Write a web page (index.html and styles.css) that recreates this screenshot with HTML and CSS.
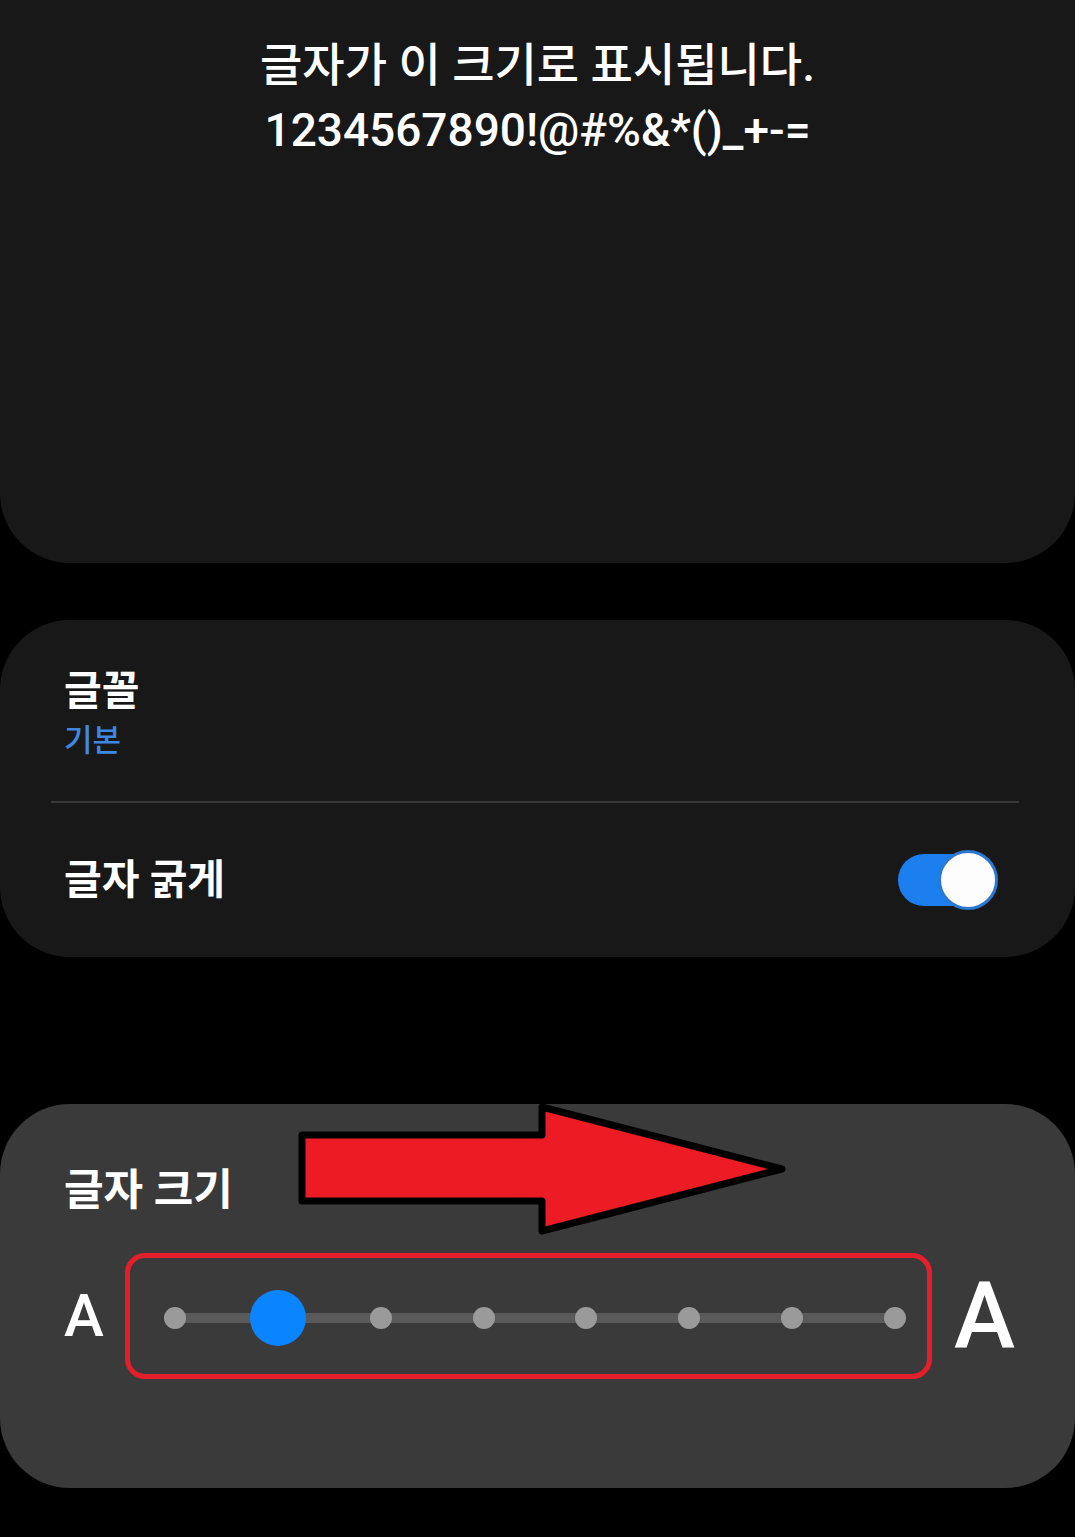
FILE: index.html
```html
<!DOCTYPE html>
<html lang="ko">
<head>
    <meta charset="UTF-8">
    <meta name="viewport" content="width=device-width, initial-scale=1.0">
    <title>글자 크기와 스타일</title>

    <link rel="stylesheet" href="styles.css">

</head>
<body>

    <div id="wrapper">

        <div class="card preview">
            <p class="preview_text">글자가 이 크기로 표시됩니다.<br>1234567890!@#%&amp;*()_+-=</p>
        </div>

        <div class="card options">

            <div class="option option_font">
                <div class="option_title">글꼴</div>
                <div class="option_value">기본</div>
            </div>

            <div class="divider"></div>

            <div class="option option_bold">
                <div class="option_title">글자 굵게</div>
                <div class="toggle">
                    <div class="toggle_knob"></div>
                </div>
            </div>

        </div>

        <div class="card size">

            <div class="size_title">글자 크기</div>

            <svg class="arrow" width="500" height="140" viewBox="0 0 500 140">
                <polygon points="4,32 244,32 244,4 484,66 244,128 244,98 4,98" fill="#ed1c24" stroke="#000" stroke-width="7" stroke-linejoin="round"/>
            </svg>

            <div class="size_row">
                <span class="size_a small">A</span>

                <div class="slider_box">
                    <div class="slider">
                        <span class="stop"></span>
                        <span class="stop active"></span>
                        <span class="stop"></span>
                        <span class="stop"></span>
                        <span class="stop"></span>
                        <span class="stop"></span>
                        <span class="stop"></span>
                        <span class="stop"></span>
                    </div>
                </div>

                <span class="size_a big">A</span>
            </div>

        </div>

    </div>

</body>
</html>
```

FILE: styles.css
```css
*{
    font-family: Roboto, "Noto Sans CJK KR", sans-serif;
    box-sizing: border-box;
}

body{
    margin: 0;
    padding: 0;

    width: 1075px;
    height: 1537px;

    background: #000;
    color: #fff;
    overflow: hidden;
}

#wrapper{
    display: flex;
    flex-direction: column;
}

.card{
    background: #181818;
    border-radius: 70px;
}

/* preview */

.preview{
    height: 563px;
    border-radius: 0 0 70px 70px;
    padding-top: 33px;
}

.preview_text{
    margin: 0;
    text-align: center;

    font-size: 46px;
    line-height: 65px;
    font-weight: 500;
}

/* options */

.options{
    margin-top: 57px;
    height: 337px;

    display: flex;
    flex-direction: column;
}

.option{
    padding: 0 77px 0 64px;
}

.option_font{
    height: 181px;
    padding-top: 44px;
}

.option_title{
    font-size: 41px;
    line-height: 54px;
    font-weight: 700;
}

.option_value{
    font-size: 31px;
    line-height: 46px;
    font-weight: 500;
    color: #3f87e0;
}

.divider{
    height: 2px;
    margin: 0 56px 0 51px;
    background: #383838;
}

.option_bold{
    flex: 1;

    display: flex;
    align-items: center;
    justify-content: space-between;
}

.toggle{
    width: 92px;
    height: 52px;
    margin-right: 8px;

    border-radius: 26px;
    background: #1b7ff0;

    display: flex;
    align-items: center;
    justify-content: flex-end;
}

.toggle_knob{
    width: 60px;
    height: 60px;
    margin-right: -8px;

    border-radius: 50%;
    background: #fdfdfd;
    border: 3px solid #2a78d0;
}

/* text size */

.size{
    position: relative;

    margin-top: 147px;
    height: 384px;

    background: #3a3a3a;
    padding-top: 55px;
}

.size_title{
    padding-left: 64px;

    font-size: 43px;
    line-height: 62px;
    font-weight: 700;
}

.arrow{
    position: absolute;
    left: 298px;
    top: -1px;
}

.size_row{
    margin-top: 32px;

    display: flex;
    align-items: center;
}

.size_a{
    font-family: Roboto, sans-serif;
    font-weight: 500;
    line-height: 1;
}

.size_a.small{
    width: 125px;
    padding-left: 64px;
    font-size: 60px;
}

.size_a.big{
    padding-left: 22px;
    font-size: 92px;
}

.slider_box{
    width: 807px;
    height: 126px;

    border: 5px solid #e41f2b;
    border-radius: 20px;

    padding: 4px 21px 0 34px;

    display: flex;
    align-items: center;
}

.slider{
    flex: 1;
    height: 60px;

    display: flex;
    align-items: center;
    justify-content: space-between;

    background: linear-gradient(#5a5a5a, #5a5a5a) center / calc(100% - 22px) 10px no-repeat;
}

.stop{
    width: 22px;
    height: 22px;

    border-radius: 50%;
    background: #9a9a9a;
}

.stop.active{
    width: 56px;
    height: 56px;
    margin: 0 -17px;

    background: #0a84ff;
}
```
